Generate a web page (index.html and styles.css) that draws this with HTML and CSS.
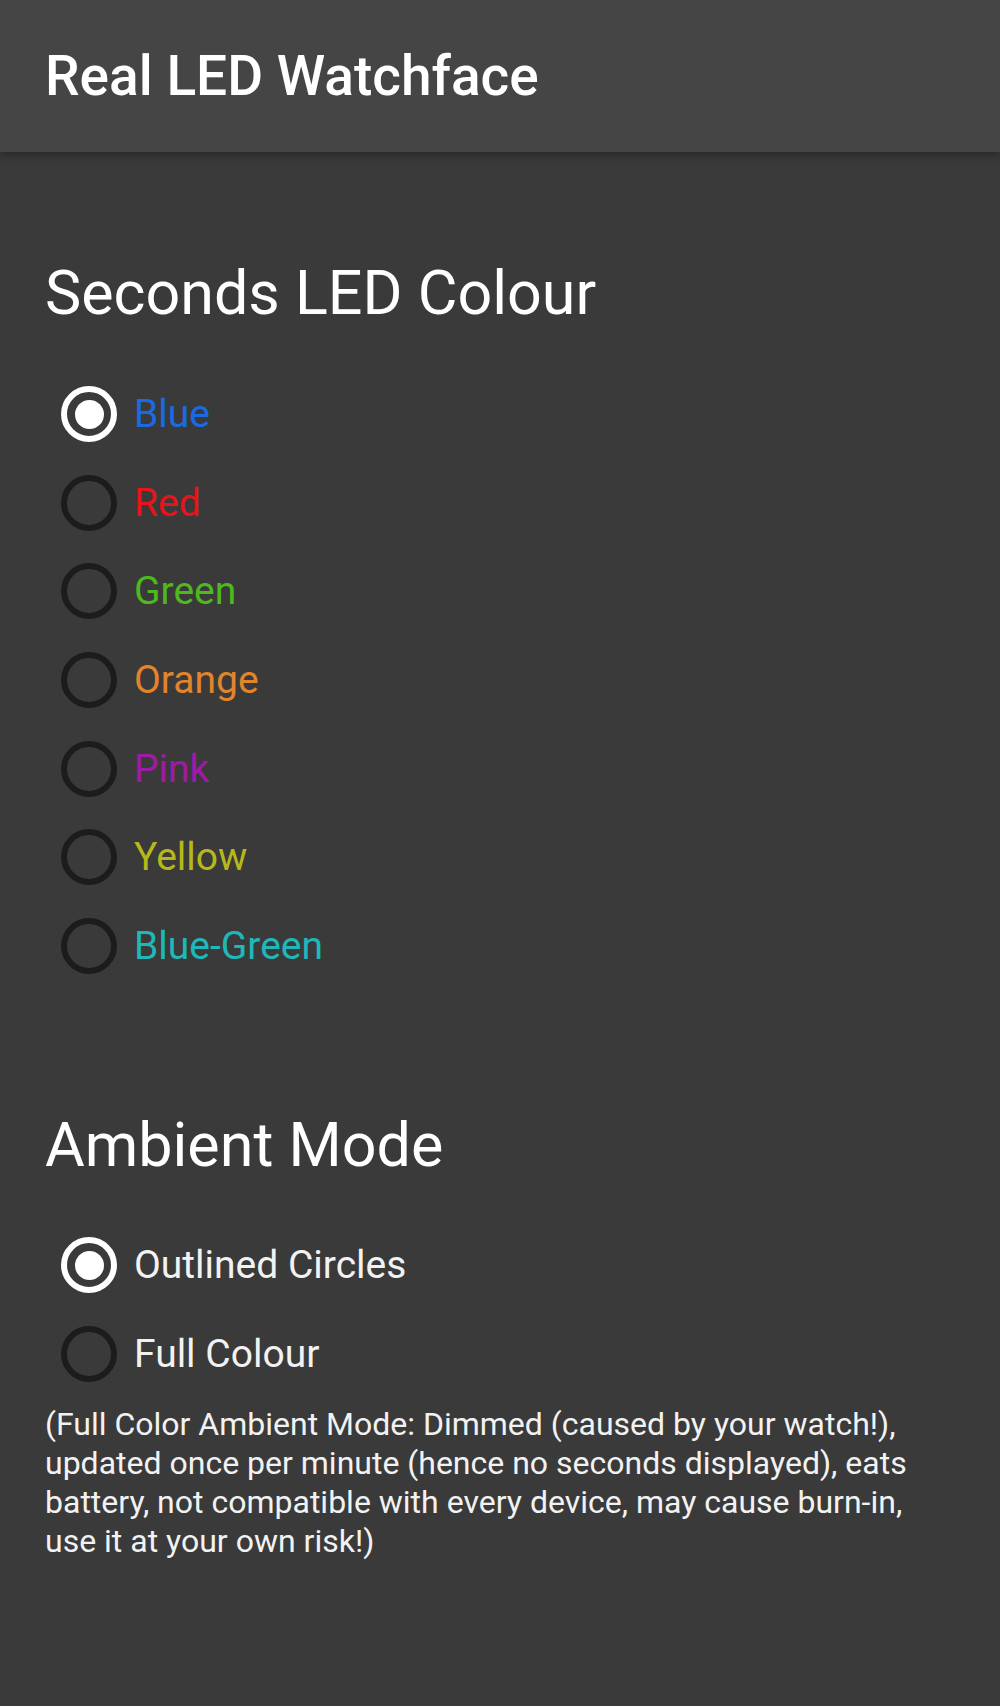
FILE: index.html
```html
<!DOCTYPE html>
<html lang="en">
<head>
  <meta charset="UTF-8">
  <title>Real LED Watchface</title>
  <meta name="viewport" content="width=device-width, initial-scale=1.0">
  <link rel="stylesheet" href="styles.css">
</head>
<body>
  <!-- toolbar -->
  <div class="toolbar">
    <div class="toolbar-title">Real LED Watchface</div>
  </div>

  <div class="settings">
    <div class="section-title">Seconds LED Colour</div>
    <div class="radio-group">
      <label class="radio-row"><input type="radio" name="led" checked><span class="c-blue">Blue</span></label>
      <label class="radio-row"><input type="radio" name="led"><span class="c-red">Red</span></label>
      <label class="radio-row"><input type="radio" name="led"><span class="c-green">Green</span></label>
      <label class="radio-row"><input type="radio" name="led"><span class="c-orange">Orange</span></label>
      <label class="radio-row"><input type="radio" name="led"><span class="c-pink">Pink</span></label>
      <label class="radio-row"><input type="radio" name="led"><span class="c-yellow">Yellow</span></label>
      <label class="radio-row"><input type="radio" name="led"><span class="c-bluegreen">Blue-Green</span></label>
    </div>

    <div class="section-title ambient">Ambient Mode</div>
    <div class="radio-group">
      <label class="radio-row"><input type="radio" name="ambient" checked><span>Outlined Circles</span></label>
      <label class="radio-row"><input type="radio" name="ambient"><span>Full Colour</span></label>
    </div>
    <p class="note">(Full Color Ambient Mode: Dimmed (caused by your watch!), updated once per minute (hence no seconds displayed), eats battery, not compatible with every device, may cause burn-in, use it at your own risk!)</p>
  </div>
</body>
</html>
```

FILE: styles.css
```css
body {
  font-family: Roboto, 'Noto Sans', Arial, sans-serif;
  margin: 0;
  padding: 0;
  background: #3a3a3a;
  color: #fff;
  min-height: 1706px;
}
.toolbar {
  height: 152px;
  background: #454545;
  display: flex;
  align-items: center;
  padding: 0 45px;
  box-shadow: 0 3px 10px rgba(0, 0, 0, 0.35);
  position: relative;
}
.toolbar-title {
  font-size: 55px;
  font-weight: 500;
  color: #fff;
}
.settings {
  padding: 102px 45px 0;
}
.section-title {
  font-size: 61px;
  line-height: 78px;
  color: #fff;
  margin-bottom: 38px;
}
.section-title.ambient {
  margin-top: 116px;
  margin-bottom: 37px;
}
.radio-group {
  display: flex;
  flex-direction: column;
}
.radio-row {
  height: 88.6px;
  display: flex;
  align-items: center;
  gap: 17px;
  font-size: 39px;
  color: #f2f2f2;
}
.radio-row input {
  appearance: none;
  -webkit-appearance: none;
  margin: 0 0 0 16px;
  width: 56px;
  height: 56px;
  border: 6px solid #1c1c1c;
  border-radius: 50%;
  box-sizing: border-box;
  display: flex;
  align-items: center;
  justify-content: center;
}
.radio-row input:checked {
  border-color: #fff;
}
.radio-row input:checked::after {
  content: "";
  width: 29px;
  height: 29px;
  border-radius: 50%;
  background: #fff;
}
.c-blue {color: #1a6ae6;}
.c-red {color: #e8141a;}
.c-green {color: #4fb81c;}
.c-orange {color: #e2852a;}
.c-pink {color: #a01aa8;}
.c-yellow {color: #b6b81a;}
.c-bluegreen {color: #1fb8b8;}
.note {
  margin: 7px 0 0;
  font-size: 32px;
  line-height: 39px;
  color: #f2f2f2;
}
```
